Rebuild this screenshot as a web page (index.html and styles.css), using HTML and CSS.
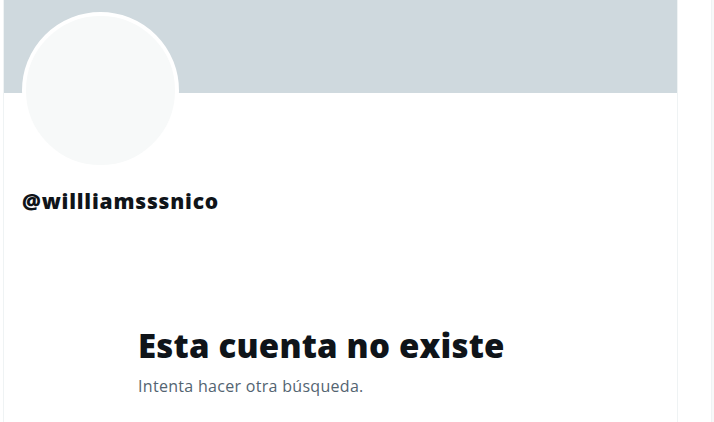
FILE: index.html
```html
<!DOCTYPE html>
<html lang="es">
<head>
  <meta charset="UTF-8" />
  <meta name="viewport" content="width=device-width, initial-scale=1.0"/>
  <title>@willliamsssnico</title>
  <link rel="stylesheet" href="styles.css">
</head>
<body>
  <div class="layout">
    <main class="profile-column">
      <div class="banner"></div>
      <div class="profile-head">
        <div class="avatar"></div>
        <h2 class="handle">@willliamsssnico</h2>
      </div>
      <div class="empty-state">
        <h1>Esta cuenta no existe</h1>
        <p>Intenta hacer otra búsqueda.</p>
      </div>
    </main>
    <aside class="sidebar"></aside>
    <div class="sidebar-edge"></div>
  </div>
</body>
</html>
```

FILE: styles.css
```css
 * {
   box-sizing: border-box;
 }

 body {
   margin: 0;
   background: #ffffff;
   font-family: 'Open Sans', 'Liberation Sans', sans-serif;
   color: #0f1419;
 }

 .layout {
   display: flex;
   height: 422px;
   padding-left: 3px;
   overflow: hidden;
 }

 .profile-column {
   width: 675px;
   flex-shrink: 0;
   border-left: 1px solid #eff3f4;
   border-right: 1px solid #eff3f4;
 }

 .banner {
   height: 93px;
   background: #cfd9de;
 }

 .profile-head {
   padding: 0 18px;
 }

 .avatar {
   width: 157px;
   height: 157px;
   margin-top: -81px;
   border-radius: 50%;
   background: #f7f9f9;
   border: 4px solid #ffffff;
 }

 .handle {
   margin: 20px 0 0 0;
   font-size: 21px;
   font-weight: 800;
   line-height: 25px;
   letter-spacing: 0.8px;
 }

 .empty-state {
   padding: 112px 0 0 134px;
 }

 .empty-state h1 {
   margin: 0;
   font-size: 33px;
   font-weight: 800;
   line-height: 40px;
   letter-spacing: 0.2px;
 }

 .empty-state p {
   margin: 10px 0 0 0;
   font-size: 16px;
   line-height: 20px;
   letter-spacing: 0.3px;
   color: #536471;
 }

 .sidebar {
   width: 33px;
   flex-shrink: 0;
 }

 .sidebar-edge {
   flex: 1;
   border-left: 1px solid #eff3f4;
   background: #f7f9f9;
 }
```
